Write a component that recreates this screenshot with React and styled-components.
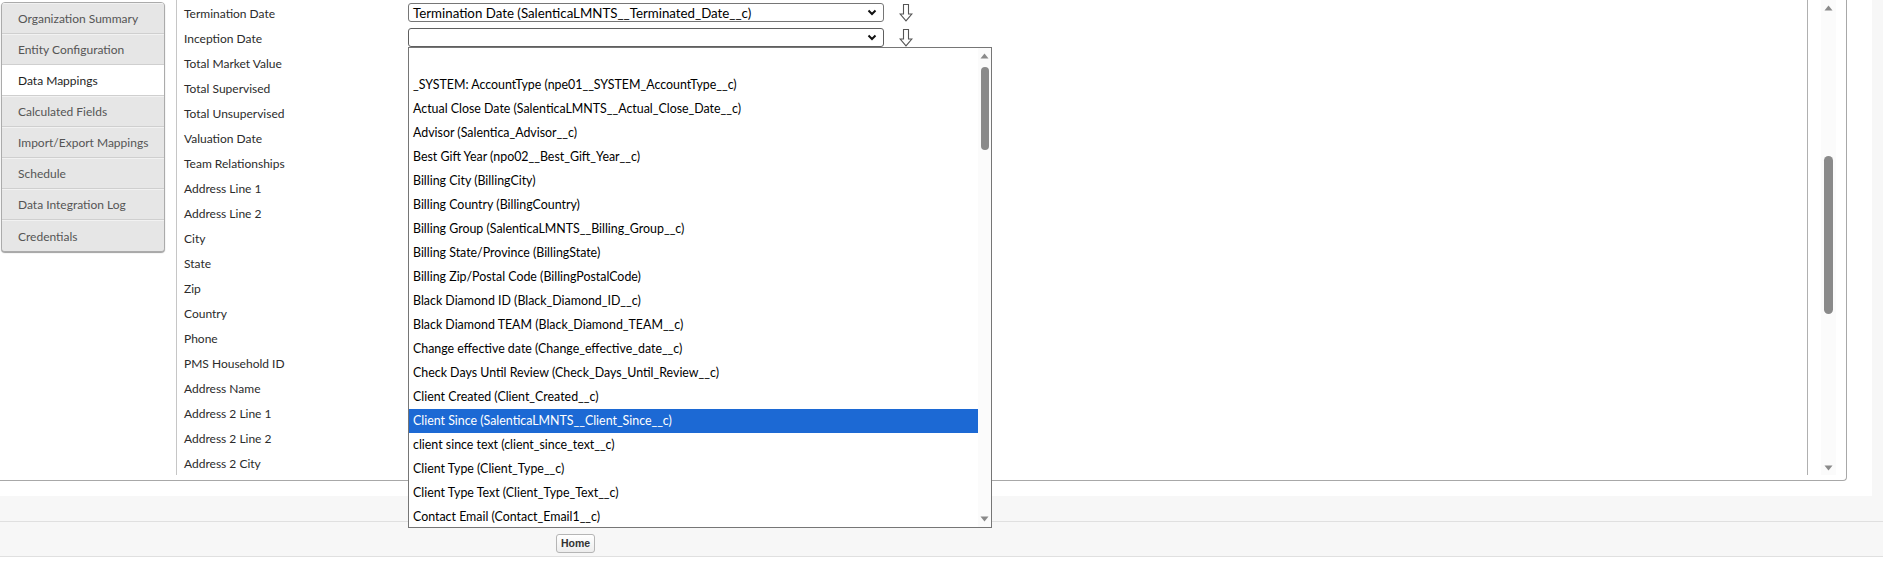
import React from "react";
import styled, { createGlobalStyle } from "styled-components";

const GlobalStyle = createGlobalStyle`
  html, body {
    margin: 0;
    padding: 0;
    background: #ffffff;
    font-family: "Lato", "Liberation Sans", sans-serif;
  }
`;

const tabs = [
  "Organization Summary",
  "Entity Configuration",
  "Data Mappings",
  "Calculated Fields",
  "Import/Export Mappings",
  "Schedule",
  "Data Integration Log",
  "Credentials",
];

const fields = [
  { label: "Termination Date", value: "Termination Date (SalenticaLMNTS__Terminated_Date__c)" },
  { label: "Inception Date", value: "", open: true },
  { label: "Total Market Value" },
  { label: "Total Supervised" },
  { label: "Total Unsupervised" },
  { label: "Valuation Date" },
  { label: "Team Relationships" },
  { label: "Address Line 1" },
  { label: "Address Line 2" },
  { label: "City" },
  { label: "State" },
  { label: "Zip" },
  { label: "Country" },
  { label: "Phone" },
  { label: "PMS Household ID" },
  { label: "Address Name" },
  { label: "Address 2 Line 1" },
  { label: "Address 2 Line 2" },
  { label: "Address 2 City" },
];

const options = [
  "",
  "_SYSTEM: AccountType (npe01__SYSTEM_AccountType__c)",
  "Actual Close Date (SalenticaLMNTS__Actual_Close_Date__c)",
  "Advisor (Salentica_Advisor__c)",
  "Best Gift Year (npo02__Best_Gift_Year__c)",
  "Billing City (BillingCity)",
  "Billing Country (BillingCountry)",
  "Billing Group (SalenticaLMNTS__Billing_Group__c)",
  "Billing State/Province (BillingState)",
  "Billing Zip/Postal Code (BillingPostalCode)",
  "Black Diamond ID (Black_Diamond_ID__c)",
  "Black Diamond TEAM (Black_Diamond_TEAM__c)",
  "Change effective date (Change_effective_date__c)",
  "Check Days Until Review (Check_Days_Until_Review__c)",
  "Client Created (Client_Created__c)",
  "Client Since (SalenticaLMNTS__Client_Since__c)",
  "client since text (client_since_text__c)",
  "Client Type (Client_Type__c)",
  "Client Type Text (Client_Type_Text__c)",
  "Contact Email (Contact_Email1__c)",
];

function Chevron() {
  return (
    <svg width="10" height="7" viewBox="0 0 10 7">
      <path d="M1.5 1.5 L5 5 L8.5 1.5" fill="none" stroke="#111" strokeWidth="2" />
    </svg>
  );
}

function DownArrow() {
  return (
    <svg width="14" height="18" viewBox="0 0 14 18">
      <path
        d="M4.5 0.5 H9.5 V10 H12.8 L7 16.8 L1.2 10 H4.5 Z"
        fill="none"
        stroke="#555"
        strokeWidth="1.1"
      />
    </svg>
  );
}

function Triangle({ up }) {
  return (
    <svg width="9" height="6" viewBox="0 0 9 6">
      <path d={up ? "M0.5 5.5 L4.5 0.5 L8.5 5.5 Z" : "M0.5 0.5 L8.5 0.5 L4.5 5.5 Z"} fill="#8a8a8a" />
    </svg>
  );
}

function App() {
  return (
    <>
      <GlobalStyle />
      <Top>
        <Page>
          <Panel>
            <Nav>
              {tabs.map((t) => (
                <Tab key={t} active={t === "Data Mappings"}>
                  {t}
                </Tab>
              ))}
            </Nav>
            <Content>
              <Rows>
                {fields.map((f) => (
                  <Row key={f.label}>
                    <Label>{f.label}</Label>
                    <SelectBox open={f.open}>
                      <span>{f.value}</span>
                      <Chevron />
                    </SelectBox>
                    <ArrowBtn>
                      <DownArrow />
                    </ArrowBtn>
                  </Row>
                ))}
              </Rows>
              <Dropdown>
                <OptionList>
                  {options.map((o, i) => (
                    <Option key={i} selected={o.startsWith("Client Since")}>
                      {o}
                    </Option>
                  ))}
                </OptionList>
                <ListScroll>
                  <Triangle up />
                  <ListThumb />
                  <Spacer />
                  <Triangle />
                </ListScroll>
              </Dropdown>
            </Content>
            <OuterScroll>
              <Track>
                <Triangle up />
                <OuterThumb />
                <Spacer />
                <Triangle />
              </Track>
            </OuterScroll>
          </Panel>
        </Page>
      </Top>
      <Band />
      <ButtonBar>
        <HomeButton>Home</HomeButton>
      </ButtonBar>
    </>
  );
}
export default App;

const Top = styled.div`
  display: flex;
  background: #f7f7f7;
`;

const Page = styled.div`
  width: 1872px;
  height: 496px;
  background: #ffffff;
`;

const Panel = styled.div`
  display: flex;
  width: 1847px;
  height: 481px;
  border-right: 1px solid #a8a8a8;
  border-bottom: 1px solid #a8a8a8;
  border-bottom-right-radius: 4px;
  box-sizing: border-box;
`;

const Nav = styled.div`
  align-self: flex-start;
  margin: 2px 0 0 1px;
  width: 164px;
  box-sizing: border-box;
  border: 1px solid #ababab;
  border-radius: 4px;
  overflow: hidden;
  background: #e6e6e6;
  box-shadow: 0 1px 1px #a0a0a0;
`;

const Tab = styled.div`
  height: 31px;
  box-sizing: border-box;
  display: flex;
  align-items: center;
  padding-left: 16px;
  font-size: 12px;
  color: ${(p) => (p.active ? "#1e1e1e" : "#555555")};
  background: ${(p) => (p.active ? "#ffffff" : "#e6e6e6")};
  border-top: 1px solid ${(p) => (p.active ? "#ffffff" : "#f2f2f2")};
  border-bottom: 1px solid #cfcfcf;
  &:last-child {
    border-bottom: none;
  }
`;

const Content = styled.div`
  position: relative;
  margin-left: 11px;
  width: 1632px;
  height: 475px;
  border-left: 1px solid #c6c6c6;
  border-right: 1px solid #b0b0b0;
  box-sizing: border-box;
`;

const Rows = styled.div`
  height: 100%;
  overflow: hidden;
  padding-left: 7px;
`;

const Row = styled.div`
  display: grid;
  grid-template-columns: 224px 476px 29px;
  align-items: center;
  height: 25px;
`;

const Label = styled.div`
  font-size: 12px;
  color: #2b2b2b;
  padding-top: 2px;
  white-space: nowrap;
`;

const SelectBox = styled.div`
  display: flex;
  align-items: center;
  justify-content: space-between;
  height: 19px;
  box-sizing: border-box;
  border: 1px solid ${(p) => (p.open ? "#5f5f5f" : "#767676")};
  border-radius: 3px;
  padding: 0 6px 0 4px;
  font-size: 13.3px;
  color: #000000;
  background: #ffffff;
  white-space: nowrap;
`;

const ArrowBtn = styled.div`
  display: flex;
  justify-content: flex-end;
  padding-top: 1px;
`;

const Dropdown = styled.div`
  position: absolute;
  top: 47px;
  left: 231px;
  z-index: 10;
  width: 584px;
  height: 481px;
  box-sizing: border-box;
  border: 1px solid #767676;
  background: #ffffff;
  display: flex;
  overflow: hidden;
`;

const OptionList = styled.div`
  flex: 1;
  padding-top: 1px;
`;

const Option = styled.div`
  height: 24px;
  line-height: 24px;
  padding-left: 4px;
  font-size: 12.4px;
  white-space: nowrap;
  color: ${(p) => (p.selected ? "#ffffff" : "#000000")};
  background: ${(p) => (p.selected ? "#1c69d4" : "transparent")};
`;

const ListScroll = styled.div`
  width: 13px;
  display: flex;
  flex-direction: column;
  align-items: center;
  padding: 5px 0 5px;
  background: #fbfbfb;
`;

const ListThumb = styled.div`
  width: 8px;
  height: 83px;
  margin-top: 8px;
  border-radius: 4px;
  background: #8a8a8a;
`;

const Spacer = styled.div`
  flex: 1;
`;

const OuterScroll = styled.div`
  flex: 1;
  display: flex;
  justify-content: center;
  padding-left: 3px;
`;

const Track = styled.div`
  width: 15px;
  height: 475px;
  display: flex;
  flex-direction: column;
  align-items: center;
  padding: 5px 0 4px;
  box-sizing: border-box;
  background: #fbfbfb;
`;

const OuterThumb = styled.div`
  width: 9px;
  height: 158px;
  margin-top: 145px;
  border-radius: 5px;
  background: #8a8a8a;
`;

const Band = styled.div`
  height: 25px;
  background: #f7f7f7;
  border-bottom: 1px solid #e0e0e0;
`;

const ButtonBar = styled.div`
  height: 35px;
  background: #f7f7f7;
  border-bottom: 1px solid #e0e0e0;
  padding: 9px 0 0 556px;
  box-sizing: border-box;
`;

const HomeButton = styled.button`
  height: 19px;
  padding: 0 4px;
  font-family: "Liberation Sans", Arial, sans-serif;
  font-weight: bold;
  font-size: 10.5px;
  color: #333333;
  border: 1px solid #b5b5b5;
  border-radius: 3px;
  background: linear-gradient(#ffffff, #ededed);
`;
